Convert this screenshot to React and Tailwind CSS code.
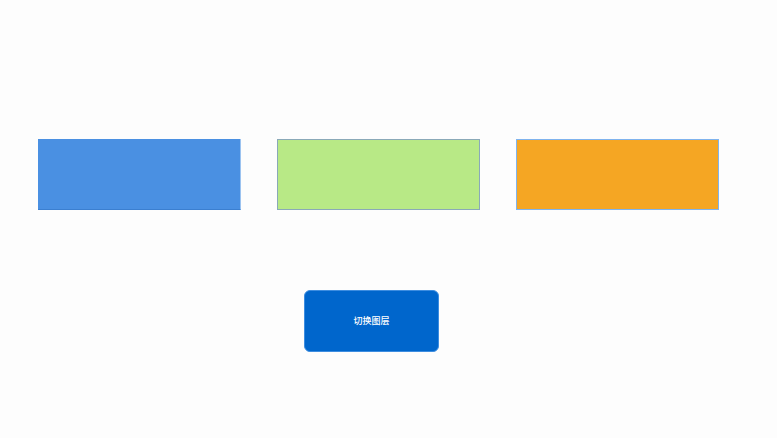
export default function App() {
  const boxes = [
    { key: 'blue', cls: 'bg-[#4a90e2] border-b border-b-[#3b7fd0] border-r border-r-[#9cc3f0]' },
    { key: 'green', cls: 'bg-[#b8e986] border border-[#8aa9b8]' },
    { key: 'orange', cls: 'bg-[#f5a623] border border-[#7fb3ee]' },
  ];

  return (
    <div
      className="w-[777px] h-[438px] bg-[#fdfdfd] flex flex-col"
      style={{ fontFamily: '"Noto Sans CJK SC", "Noto Sans", sans-serif' }}
    >
      <div className="flex gap-[36px] pl-[38px] pt-[139px]">
        {boxes.map((b) => (
          <div key={b.key} className={`w-[203px] h-[71px] ${b.cls}`} />
        ))}
      </div>
      <div className="flex pl-[304px] pt-[80px]">
        <button className="w-[135px] h-[62px] rounded-[6px] bg-[#0066cc] border border-[#3d8de0] text-white text-[9px] font-medium flex items-center justify-center">
          切换图层
        </button>
      </div>
    </div>
  );
}
